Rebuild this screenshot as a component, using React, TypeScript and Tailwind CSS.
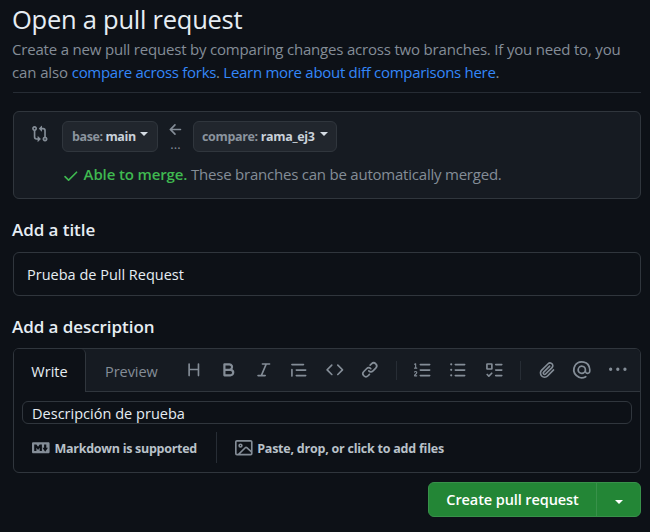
import type { ReactNode } from 'react';

const paths = {
  compare:
    'M9.573.677A.25.25 0 0 1 10 .854V2.5h1A2.5 2.5 0 0 1 13.5 5v5.628a2.251 2.251 0 1 1-1.5 0V5a1 1 0 0 0-1-1h-1v1.646a.25.25 0 0 1-.427.177L7.177 3.427a.25.25 0 0 1 0-.354ZM6 12v-1.646a.25.25 0 0 1 .427-.177l2.396 2.396a.25.25 0 0 1 0 .354l-2.396 2.396A.25.25 0 0 1 6 15.146V13.5H5A2.5 2.5 0 0 1 2.5 11V5.372a2.25 2.25 0 1 1 1.5 0V11a1 1 0 0 0 1 1ZM4 3.25a.75.75 0 1 0-1.5 0 .75.75 0 0 0 1.5 0ZM12.75 12a.75.75 0 1 0 0 1.5.75.75 0 0 0 0-1.5Z',
  check:
    'M13.78 4.22a.75.75 0 0 1 0 1.06l-7.25 7.25a.75.75 0 0 1-1.06 0L2.22 9.28a.751.751 0 0 1 .018-1.042.751.751 0 0 1 1.042-.018L6 10.94l6.72-6.72a.75.75 0 0 1 1.06 0Z',
  arrow:
    'M7.78 12.53a.75.75 0 0 1-1.06 0L2.47 8.28a.75.75 0 0 1 0-1.06l4.25-4.25a.751.751 0 0 1 1.042.018.751.751 0 0 1 .018 1.042L4.81 7h7.44a.75.75 0 0 1 0 1.5H4.81l2.97 2.97a.75.75 0 0 1 0 1.06Z',
  heading:
    'M3.75 2a.75.75 0 0 1 .75.75V7h7V2.75a.75.75 0 0 1 1.5 0v10.5a.75.75 0 0 1-1.5 0V8.5h-7v4.75a.75.75 0 0 1-1.5 0V2.75A.75.75 0 0 1 3.75 2Z',
  bold: 'M4 2h4.5a3.501 3.501 0 0 1 2.852 5.53A3.499 3.499 0 0 1 9.5 14H4a1 1 0 0 1-1-1V3a1 1 0 0 1 1-1Zm1 7v3h4.5a1.5 1.5 0 0 0 0-3Zm3.5-2a1.5 1.5 0 0 0 0-3H5v3Z',
  italic:
    'M6 2.75A.75.75 0 0 1 6.75 2h6.5a.75.75 0 0 1 0 1.5h-2.505l-3.858 9H9.25a.75.75 0 0 1 0 1.5h-6.5a.75.75 0 0 1 0-1.5h2.505l3.858-9H6.75A.75.75 0 0 1 6 2.75Z',
  quote:
    'M1.75 2.5h10.5a.75.75 0 0 1 0 1.5H1.75a.75.75 0 0 1 0-1.5Zm4 5h8.5a.75.75 0 0 1 0 1.5h-8.5a.75.75 0 0 1 0-1.5Zm0 5h8.5a.75.75 0 0 1 0 1.5h-8.5a.75.75 0 0 1 0-1.5ZM2.5 7.75v6a.75.75 0 0 1-1.5 0v-6a.75.75 0 0 1 1.5 0Z',
  code: 'm11.28 3.22 4.25 4.25a.75.75 0 0 1 0 1.06l-4.25 4.25a.749.749 0 0 1-1.275-.326.749.749 0 0 1 .215-.734L13.94 8l-3.72-3.72a.749.749 0 0 1 .326-1.275.749.749 0 0 1 .734.215Zm-6.56 0a.751.751 0 0 1 1.042.018.751.751 0 0 1 .018 1.042L2.06 8l3.72 3.72a.749.749 0 0 1-.326 1.275.749.749 0 0 1-.734-.215L.47 8.53a.75.75 0 0 1 0-1.06Z',
  link: 'm7.775 3.275 1.25-1.25a3.5 3.5 0 1 1 4.95 4.95l-2.5 2.5a3.5 3.5 0 0 1-4.95 0 .751.751 0 0 1 .018-1.042.751.751 0 0 1 1.042-.018 1.998 1.998 0 0 0 2.83 0l2.5-2.5a2.002 2.002 0 0 0-2.83-2.83l-1.25 1.25a.751.751 0 0 1-1.042-.018.751.751 0 0 1-.018-1.042Zm-4.69 9.64a1.998 1.998 0 0 0 2.83 0l1.25-1.25a.751.751 0 0 1 1.042.018.751.751 0 0 1 .018 1.042l-1.25 1.25a3.5 3.5 0 1 1-4.95-4.95l2.5-2.5a3.5 3.5 0 0 1 4.95 0 .751.751 0 0 1-.018 1.042.751.751 0 0 1-1.042.018 1.998 1.998 0 0 0-2.83 0l-2.5 2.5a1.998 1.998 0 0 0 0 2.83Z',
  ordered:
    'M5 3.25a.75.75 0 0 1 .75-.75h8.5a.75.75 0 0 1 0 1.5h-8.5A.75.75 0 0 1 5 3.25Zm0 5a.75.75 0 0 1 .75-.75h8.5a.75.75 0 0 1 0 1.5h-8.5A.75.75 0 0 1 5 8.25Zm0 5a.75.75 0 0 1 .75-.75h8.5a.75.75 0 0 1 0 1.5h-8.5a.75.75 0 0 1-.75-.75ZM.924 10.32a.5.5 0 0 1-.851-.525l.001-.001.001-.002.002-.004.007-.011c.097-.144.215-.273.348-.384.228-.19.588-.392 1.068-.392.468 0 .858.181 1.126.484.259.294.377.673.377 1.038 0 .987-.686 1.495-1.156 1.845l-.047.035c-.303.225-.522.4-.654.597h1.357a.5.5 0 0 1 0 1H.5a.5.5 0 0 1-.5-.5c0-1.005.692-1.52 1.167-1.875l.035-.025c.531-.396.8-.625.8-1.078a.57.57 0 0 0-.128-.376C1.806 10.068 1.695 10 1.5 10a.658.658 0 0 0-.429.163.835.835 0 0 0-.144.153ZM2.003 2.5V6h.503a.5.5 0 0 1 0 1H.5a.5.5 0 0 1 0-1h.503V3.308l-.28.14a.5.5 0 0 1-.446-.895l1.003-.5a.5.5 0 0 1 .723.447Z',
  unordered:
    'M5.75 2.5h8.5a.75.75 0 0 1 0 1.5h-8.5a.75.75 0 0 1 0-1.5Zm0 5h8.5a.75.75 0 0 1 0 1.5h-8.5a.75.75 0 0 1 0-1.5Zm0 5h8.5a.75.75 0 0 1 0 1.5h-8.5a.75.75 0 0 1 0-1.5ZM2 14a1 1 0 1 1 0-2 1 1 0 0 1 0 2Zm1-6a1 1 0 1 1-2 0 1 1 0 0 1 2 0ZM2 4a1 1 0 1 1 0-2 1 1 0 0 1 0 2Z',
  tasks:
    'M2 2h4a1 1 0 0 1 1 1v4a1 1 0 0 1-1 1H2a1 1 0 0 1-1-1V3a1 1 0 0 1 1-1Zm4.655 8.595a.75.75 0 0 1 0 1.06L4.03 14.28a.75.75 0 0 1-1.06 0l-1.5-1.5a.749.749 0 0 1 .326-1.275.749.749 0 0 1 .734.215l.97.97 2.095-2.095a.75.75 0 0 1 1.06 0ZM9.75 2.5h5.5a.75.75 0 0 1 0 1.5h-5.5a.75.75 0 0 1 0-1.5Zm0 5h5.5a.75.75 0 0 1 0 1.5h-5.5a.75.75 0 0 1 0-1.5Zm0 5h5.5a.75.75 0 0 1 0 1.5h-5.5a.75.75 0 0 1 0-1.5Zm-7.25-9v3h3v-3Z',
  clip: 'M12.212 3.02a1.753 1.753 0 0 0-2.478.003l-5.83 5.83a3.007 3.007 0 0 0-.88 2.127c0 .795.315 1.551.88 2.116.567.567 1.333.89 2.126.89.79 0 1.548-.321 2.116-.89l5.48-5.48a.75.75 0 0 1 1.061 1.06l-5.48 5.48a4.492 4.492 0 0 1-3.177 1.33c-1.2 0-2.345-.487-3.187-1.33a4.483 4.483 0 0 1-1.32-3.177c0-1.195.475-2.341 1.32-3.186l5.83-5.83a3.25 3.25 0 0 1 5.553 2.297c0 .863-.343 1.691-.953 2.301L7.439 12.39c-.375.377-.884.59-1.416.593a1.998 1.998 0 0 1-1.412-.593 1.992 1.992 0 0 1 0-2.828l5.48-5.48a.751.751 0 0 1 1.042.018.751.751 0 0 1 .018 1.042l-5.48 5.48a.492.492 0 0 0 0 .707.499.499 0 0 0 .352.154.51.51 0 0 0 .356-.154l5.833-5.827a1.755 1.755 0 0 0 0-2.481Z',
  mention:
    'M4.75 2.37a6.501 6.501 0 0 0 6.5 11.26.75.75 0 0 1 .75 1.298A7.999 7.999 0 0 1 .989 4.148 8 8 0 0 1 16 7.75v1.5a2.75 2.75 0 0 1-5.072 1.475 3.999 3.999 0 0 1-6.65-4.19A4 4 0 0 1 12 8v1.25a1.25 1.25 0 0 0 2.5 0V7.867a6.5 6.5 0 0 0-9.75-5.496ZM10.5 8a2.5 2.5 0 1 0-5 0 2.5 2.5 0 0 0 5 0Z',
  more: 'M8 9a1.5 1.5 0 1 0 0-3 1.5 1.5 0 0 0 0 3ZM1.5 9a1.5 1.5 0 1 0 0-3 1.5 1.5 0 0 0 0 3Zm13 0a1.5 1.5 0 1 0 0-3 1.5 1.5 0 0 0 0 3Z',
  markdown:
    'M14.85 3c.63 0 1.15.52 1.14 1.15v7.7c0 .63-.51 1.15-1.15 1.15H1.15C.52 13 0 12.48 0 11.84V4.15C0 3.52.52 3 1.15 3ZM9 11V5H7L5.5 7 4 5H2v6h2V8l1.5 1.92L7 8v3Zm2.99.5L14.5 8H13V5h-2v3H9.5Z',
  image:
    'M16 13.25A1.75 1.75 0 0 1 14.25 15H1.75A1.75 1.75 0 0 1 0 13.25V2.75C0 1.784.784 1 1.75 1h12.5c.966 0 1.75.784 1.75 1.75ZM1.75 2.5a.25.25 0 0 0-.25.25v10.5c0 .138.112.25.25.25h.94l.03-.03 6.077-6.078a1.75 1.75 0 0 1 2.412-.06L14.5 10.31V2.75a.25.25 0 0 0-.25-.25Zm12.5 11a.25.25 0 0 0 .25-.25v-.917l-4.298-3.889a.25.25 0 0 0-.344.009L4.81 13.5ZM7 6a2 2 0 1 1-3.999.001A2 2 0 0 1 7 6ZM5.5 6a.5.5 0 1 0-1 0 .5.5 0 0 0 1 0Z',
};

type IconName = keyof typeof paths;

function Icon({ name, className = '' }: { name: IconName; className?: string }) {
  return (
    <svg viewBox="0 0 16 16" className={`size-[17.6px] shrink-0 overflow-visible fill-current ${className}`} aria-hidden="true">
      <path d={paths[name]} />
    </svg>
  );
}

function Caret({ className = '' }: { className?: string }) {
  return (
    <svg viewBox="0 0 8 4" className={`h-[4px] w-[8px] shrink-0 fill-current ${className}`} aria-hidden="true">
      <path d="M0 0h8L4 4Z" />
    </svg>
  );
}

function BranchButton({ label, branch, className }: { label: string; branch: string; className: string }) {
  return (
    <button
      className={`flex h-[31px] items-center rounded-[6px] border border-[#30363d] bg-[#21262d] text-[12.5px] font-bold whitespace-pre ${className}`}
    >
      <span className="pt-px text-[#8b949e]">{label} </span>
      <span className="pt-px text-[#c9d1d9]">{branch}</span>
      <Caret className="mb-[5px] ml-auto text-[#d5dce3]" />
    </button>
  );
}

function Tool({ name }: { name: IconName }) {
  return (
    <button className="flex w-[35.2px] shrink-0 justify-center">
      <Icon name={name} />
    </button>
  );
}

function Separator() {
  return <span className="mx-[8.7px] h-[19px] w-px shrink-0 bg-[#272d35]" />;
}

function Label({ children }: { children: ReactNode }) {
  return <h2 className="-ml-px h-[24px] text-[17px] leading-[24px] font-semibold tracking-[-0.06px] text-[#e6edf3]">{children}</h2>;
}

export default function App() {
  return (
    <main className="flex h-[532px] w-[650px] flex-col overflow-hidden bg-[#0d1117] pr-[9px] pl-[13px] font-['Open_Sans','Noto_Sans',sans-serif] text-[15px] text-[#e6edf3]">
      <header className="h-[93px] shrink-0 border-b border-[#262c34]">
        <h1 className="-ml-px h-[38px] text-[25.5px] leading-[38px] tracking-[-0.25px]">Open a pull request</h1>
        <p className="-ml-px text-[15px] leading-[23px] tracking-[-0.19px] whitespace-nowrap text-[#848d97]">
          Create a new pull request by comparing changes across two branches. If you need to, you
          <br />
          <span className="tracking-[-0.12px]">can also </span>
          <span className="tracking-[-0.29px]">
            <a className="text-[#3487f9]">compare across forks</a>. <a className="text-[#3487f9]">Learn more about diff comparisons here</a>.
          </span>
        </p>
      </header>

      <section className="mt-[18px] h-[88px] shrink-0 rounded-[6px] border border-[#30363d] bg-[#161b22] pt-[9px] pl-[17px]">
        <div className="flex h-[31px] items-start">
          <Icon name="compare" className="mt-[4px] text-[#848d97]" />
          <BranchButton label="base:" branch="main" className="ml-[13.4px] w-[96px] pr-[9px] pl-[9px] tracking-[-0.4px]" />
          <div className="flex w-[35px] flex-col items-center text-[#848d97]">
            <Icon name="arrow" />
            <span className="-mt-[2px] text-[13px] leading-[14px]">...</span>
          </div>
          <BranchButton label="compare:" branch="rama_ej3" className="w-[144px] pr-[8px] pl-[8px] tracking-[-0.34px]" />
        </div>
        <p className="mt-[10px] ml-[31px] flex h-[24px] items-center whitespace-pre text-[#848d97]">
          <Icon name="check" className="mt-[4px] mr-[4px] text-[#3fb950]" />
          <b className="font-semibold tracking-[-0.13px] text-[#3fb950]">Able to merge. </b>
          <span className="tracking-[-0.22px]">These branches can be automatically merged.</span>
        </p>
      </section>

      <div className="mt-[19px]">
        <Label>Add a title</Label>
      </div>
      <div className="mt-[10px] flex h-[44px] shrink-0 items-center rounded-[6px] border border-[#30363d] pt-[2px] pl-[13px] text-[14.5px]">
        Prueba de Pull Request
      </div>

      <div className="mt-[19px]">
        <Label>Add a description</Label>
      </div>
      <section className="mt-[9px] h-[125px] shrink-0 rounded-[6px] border border-[#30363d]">
        <div className="flex h-[43px] rounded-t-[5px] bg-[#161b22]">
          <div className="flex h-[43px] w-[72px] items-center justify-center rounded-t-[5px] border-r border-[#30363d] bg-[#0d1117] pt-[3px] text-[14.5px]">
            Write
          </div>
          <div className="flex flex-1 items-center border-b border-[#30363d] pl-[19px] text-[#848d97]">
            <span className="w-[71px] pt-[3px] text-[14.5px] tracking-[-0.05px]">Preview</span>
            <Tool name="heading" />
            <Tool name="bold" />
            <Tool name="italic" />
            <Tool name="quote" />
            <Tool name="code" />
            <Tool name="link" />
            <Separator />
            <Tool name="ordered" />
            <Tool name="unordered" />
            <Tool name="tasks" />
            <Separator />
            <Tool name="clip" />
            <Tool name="mention" />
            <Tool name="more" />
          </div>
        </div>
        <div className="mx-[8px] mt-[9px] flex h-[23px] items-center overflow-hidden rounded-[6px] border border-[#30363d] pt-[2px] pl-[9px] text-[14.5px] tracking-[0.02px]">
          Descripción de prueba
        </div>
        <footer className="mt-[8px] flex h-[31px] items-center pl-[18px] text-[12.5px] font-bold whitespace-nowrap text-[#b9c1c9]">
          <Icon name="markdown" className="mr-[5px] text-[#848d97]" />
          <span className="w-[161px] pt-[3px] tracking-[-0.28px]">Markdown is supported</span>
          <span className="mr-[18px] h-[31px] w-px bg-[#272d35]" />
          <Icon name="image" className="mr-[5px] text-[#848d97]" />
          <span className="pt-[3px] tracking-[-0.23px]">Paste, drop, or click to add files</span>
        </footer>
      </section>

      <div className="mt-[9px] flex h-[35px] w-[213px] shrink-0 self-end overflow-hidden rounded-[6px] border border-[#38914a] bg-[#238636] text-[14.5px] font-semibold text-white">
        <button className="flex w-[168px] items-center justify-center border-r border-[#38914a] tracking-[-0.1px]">Create pull request</button>
        <button className="flex flex-1 items-center justify-center">
          <Caret className="mt-[4px]" />
        </button>
      </div>
    </main>
  );
}
